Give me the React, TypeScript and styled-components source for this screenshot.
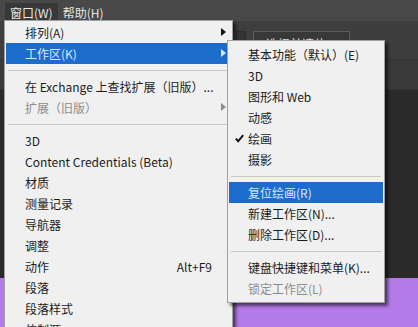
import React from "react";
import styled, { createGlobalStyle } from "styled-components";

const Global = createGlobalStyle`
  html, body { margin: 0; padding: 0; background: #2a2a2a; }
  body { width: 418px; height: 327px; overflow: hidden; }
  * { box-sizing: border-box; }
`;

const FONT = `"Noto Sans CJK SC", "Noto Sans", sans-serif`;

const Page = styled.div`
  position: relative;
  width: 418px;
  height: 327px;
  overflow: hidden;
  display: flex;
  flex-direction: column;
  font-family: ${FONT};
  background: #2a2a2a;
`;

const MenuBar = styled.div`
  height: 21px;
  flex: none;
  display: flex;
  align-items: flex-end;
  padding-left: 5px;
  background: #484848;
`;

const BarItem = styled.div<{ $open?: boolean }>`
  height: 18px;
  padding: 0 5px;
  display: flex;
  align-items: center;
  font-size: 12px;
  color: #e6e6e6;
  background: ${(p) => (p.$open ? "#383838" : "transparent")};
`;

const OptionsBar = styled.div`
  height: 39px;
  flex: none;
  display: flex;
  align-items: flex-start;
  padding: 10px 0 0 236px;
  gap: 7px;
  background: #3e3e3e;
  border-bottom: 1px solid #333;
`;

const SmallBox = styled.div`
  width: 10px;
  height: 22px;
  border: 1px solid #2c2c2c;
  background: #353535;
`;

const MaskButton = styled.div`
  width: 97px;
  height: 22px;
  border: 1px solid #5c5c5c;
  background: #383838;
  color: #d8d8d8;
  font-size: 12px;
  display: flex;
  align-items: center;
  padding: 2px 0 0 12px;
`;

const TabBar = styled.div`
  height: 30px;
  flex: none;
  background: #3a3a3a;
  border-bottom: 1px solid #2f2f2f;
`;

const Canvas = styled.div`
  height: 188px;
  flex: none;
  background: #2a2a2a;
`;

const Purple = styled.div`
  flex: 1;
  background: #b57be8;
`;

const Menu = styled.div<{ $left: number; $top: number; $width: number; $pad: number }>`
  position: absolute;
  left: ${(p) => p.$left}px;
  top: ${(p) => p.$top}px;
  width: ${(p) => p.$width}px;
  padding: ${(p) => p.$pad}px 1px;
  background: #f0f0f0;
  border: 1px solid #a0a0a0;
  box-shadow: 3px 3px 3px rgba(0, 0, 0, 0.55);
  display: flex;
  flex-direction: column;
`;

const Item = styled.div<{ $active?: boolean; $disabled?: boolean }>`
  position: relative;
  height: 21px;
  flex: none;
  display: flex;
  align-items: center;
  padding: 0 19px 0 19px;
  font-size: 12px;
  white-space: nowrap;
  color: ${(p) => (p.$active ? "#d9e8fa" : p.$disabled ? "#8c8c8c" : "#1c1c1c")};
  background: ${(p) => (p.$active ? "#1c6ccb" : "transparent")};
`;

const Label = styled.span`
  flex: 1;
`;

const Shortcut = styled.span`
  color: #1c1c1c;
`;

const Arrow = styled.span<{ $color: string }>`
  position: absolute;
  right: 5px;
  top: 6px;
  width: 0;
  height: 0;
  border-top: 4.5px solid transparent;
  border-bottom: 4.5px solid transparent;
  border-left: 5px solid ${(p) => p.$color};
`;

const Check = styled.svg`
  position: absolute;
  left: 6px;
  top: 6px;
`;

const Sep = styled.div`
  height: 12px;
  flex: none;
  display: flex;
  align-items: center;
  padding: 0 2px;
  &::after {
    content: "";
    flex: 1;
    height: 1px;
    background: #c9c9c9;
  }
`;

type Entry =
  | { sep: true }
  | {
      sep?: false;
      label: string;
      active?: boolean;
      disabled?: boolean;
      sub?: boolean;
      shortcut?: string;
      check?: boolean;
    };

const mainItems: Entry[] = [
  { label: "排列(A)", sub: true },
  { label: "工作区(K)", sub: true, active: true },
  { sep: true },
  { label: "在 Exchange 上查找扩展（旧版）..." },
  { label: "扩展（旧版）", sub: true, disabled: true },
  { sep: true },
  { label: "3D" },
  { label: "Content Credentials (Beta)" },
  { label: "材质" },
  { label: "测量记录" },
  { label: "导航器" },
  { label: "调整" },
  { label: "动作", shortcut: "Alt+F9" },
  { label: "段落" },
  { label: "段落样式" },
  { label: "仿制源" },
];

const subItems: Entry[] = [
  { label: "基本功能（默认）(E)" },
  { label: "3D" },
  { label: "图形和 Web" },
  { label: "动感" },
  { label: "绘画", check: true },
  { label: "摄影" },
  { sep: true },
  { label: "复位绘画(R)", active: true },
  { label: "新建工作区(N)..." },
  { label: "删除工作区(D)..." },
  { sep: true },
  { label: "键盘快捷键和菜单(K)..." },
  { label: "锁定工作区(L)", disabled: true },
];

function renderEntries(list: Entry[]) {
  return list.map((e, i) => {
    if (e.sep) return <Sep key={i} />;
    const arrowColor = e.active ? "#d9e8fa" : e.disabled ? "#8c8c8c" : "#111";
    return (
      <Item key={i} $active={e.active} $disabled={e.disabled}>
        {e.check && (
          <Check width="9" height="9" viewBox="0 0 9 9">
            <path d="M0.8 4.6 L3.2 7.2 L8.2 1.2" fill="none" stroke="#111" strokeWidth="1.9" />
          </Check>
        )}
        <Label>{e.label}</Label>
        {e.shortcut && <Shortcut>{e.shortcut}</Shortcut>}
        {e.sub && <Arrow $color={arrowColor} />}
      </Item>
    );
  });
}

export default function App() {
  return (
    <>
      <Global />
      <Page>
        <MenuBar>
          <BarItem $open>窗口(W)</BarItem>
          <BarItem>帮助(H)</BarItem>
        </MenuBar>
        <OptionsBar>
          <SmallBox />
          <MaskButton>选择并遮住...</MaskButton>
        </OptionsBar>
        <TabBar />
        <Canvas />
        <Purple />
        <Menu $left={4} $top={20} $width={229} $pad={1}>
          {renderEntries(mainItems)}
        </Menu>
        <Menu $left={227} $top={40} $width={158} $pad={3}>
          {renderEntries(subItems)}
        </Menu>
      </Page>
    </>
  );
}
